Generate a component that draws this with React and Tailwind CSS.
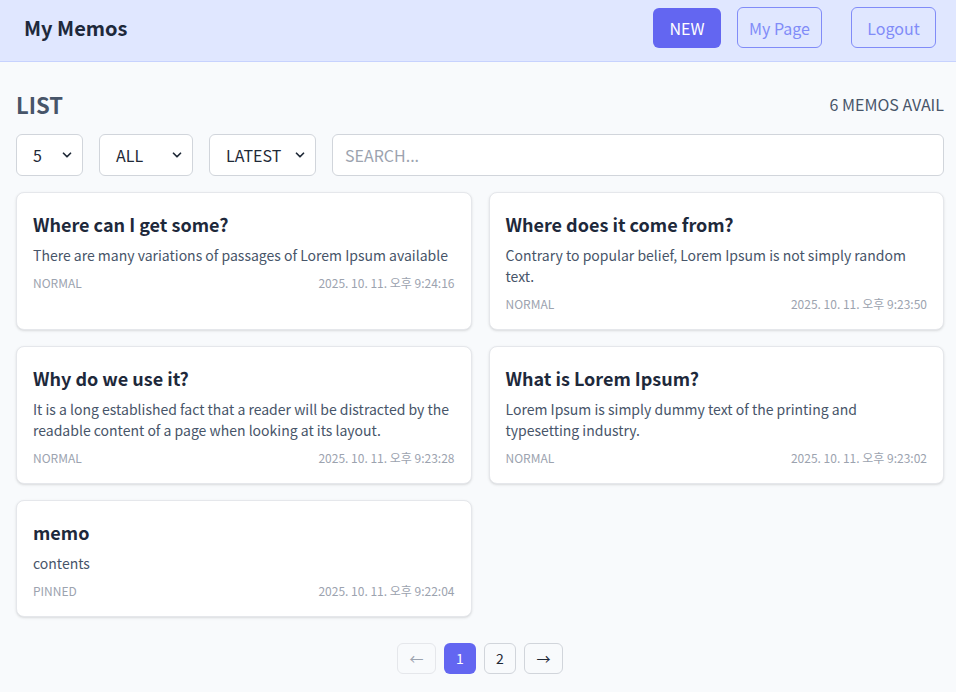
import React from 'react';
import { ChevronDown } from 'lucide-react';

const memos = [
    { title: 'Where can I get some?', body: 'There are many variations of passages of Lorem Ipsum available', tag: 'NORMAL', date: '2025. 10. 11. 오후 9:24:16' },
    { title: 'Where does it come from?', body: 'Contrary to popular belief, Lorem Ipsum is not simply random text.', tag: 'NORMAL', date: '2025. 10. 11. 오후 9:23:50' },
    { title: 'Why do we use it?', body: 'It is a long established fact that a reader will be distracted by the readable content of a page when looking at its layout.', tag: 'NORMAL', date: '2025. 10. 11. 오후 9:23:28' },
    { title: 'What is Lorem Ipsum?', body: 'Lorem Ipsum is simply dummy text of the printing and typesetting industry.', tag: 'NORMAL', date: '2025. 10. 11. 오후 9:23:02' },
    { title: 'memo', body: 'contents', tag: 'PINNED', date: '2025. 10. 11. 오후 9:22:04' },
];

const Select = ({ value, width }) => (
    <div className={`relative ${width} h-[42px] bg-white border border-[#d1d5db] rounded-md flex items-center pl-4`}>
        <span className="text-[16px] text-[#1f2937]">{value}</span>
        <ChevronDown size={14} strokeWidth={3} className="absolute right-[8px] top-[13px] text-[#1f2937]" />
    </div>
);

const MemoCard = ({ memo }) => (
    <div className="bg-white border border-[#e5e7eb] rounded-lg shadow-sm px-4 pt-4 pb-4 flex flex-col">
        <h3 className="text-[18px] font-bold text-[#1e293b] leading-[30px]">{memo.title}</h3>
        <p className="text-[14px] text-[#475569] leading-[21px] mt-1.5">{memo.body}</p>
        <div className="flex justify-between items-center mt-2 text-[12px] leading-[18px] text-[#9ca3af]">
            <span>{memo.tag}</span>
            <span>{memo.date}</span>
        </div>
    </div>
);

export default function App() {
    return (
        <div className="min-h-[692px] bg-[#f8fafc]" style={{ fontFamily: '"Noto Sans CJK KR", sans-serif' }}>
            {/* HEADER */}
            <header className="h-[62px] bg-[#e0e7ff] border-b border-[#c7d2fe] flex items-start justify-between pl-6 pr-5 pt-[7px]">
                <h1 className="text-[20px] font-bold text-[#1e293b] leading-[42px]">My Memos</h1>
                <div className="flex items-start">
                    <button className="mt-px h-10 w-[68px] rounded-md bg-[#6366f1] text-white text-[16px]">NEW</button>
                    <button className="ml-4 h-[41px] w-[85px] rounded-md border border-[#818cf8] text-[#818cf8] text-[16px]">My Page</button>
                    <button className="ml-[29px] h-[41px] w-[85px] rounded-md border border-[#818cf8] text-[#818cf8] text-[16px]">Logout</button>
                </div>
            </header>

            <main className="pl-4 pr-3 pt-[27px]">
                <div className="flex items-center justify-between h-[30px]">
                    <h2 className="text-[22px] font-bold text-[#475569]">LIST</h2>
                    <span className="text-[16px] text-[#475569]">6 MEMOS AVAIL</span>
                </div>

                {/* FILTERS */}
                <div className="flex gap-4 mt-[15px]">
                    <Select value="5" width="w-[67px]" />
                    <Select value="ALL" width="w-[94px]" />
                    <Select value="LATEST" width="w-[107px]" />
                    <input
                        className="flex-1 h-[42px] bg-white border border-[#d1d5db] rounded-md px-3 text-[16px] placeholder:text-[#9ca3af] outline-none"
                        placeholder="SEARCH..."
                    />
                </div>

                {/* LIST */}
                <div className="grid grid-cols-2 gap-x-[17px] gap-y-4 mt-4">
                    {memos.map((m) => (
                        <MemoCard key={m.date} memo={m} />
                    ))}
                </div>

                {/* PAGINATION */}
                <div className="flex justify-center gap-2 mt-[26px] text-[14px]">
                    <button className="h-[31px] w-[39px] rounded-md border border-[#e5e7eb] text-[#9ca3af]">←</button>
                    <button className="h-[31px] w-8 rounded-md bg-[#6366f1] text-white">1</button>
                    <button className="h-[31px] w-8 rounded-md border border-[#d1d5db] text-[#1f2937]">2</button>
                    <button className="h-[31px] w-[39px] rounded-md border border-[#d1d5db] text-[#1f2937]">→</button>
                </div>
            </main>
        </div>
    );
}
